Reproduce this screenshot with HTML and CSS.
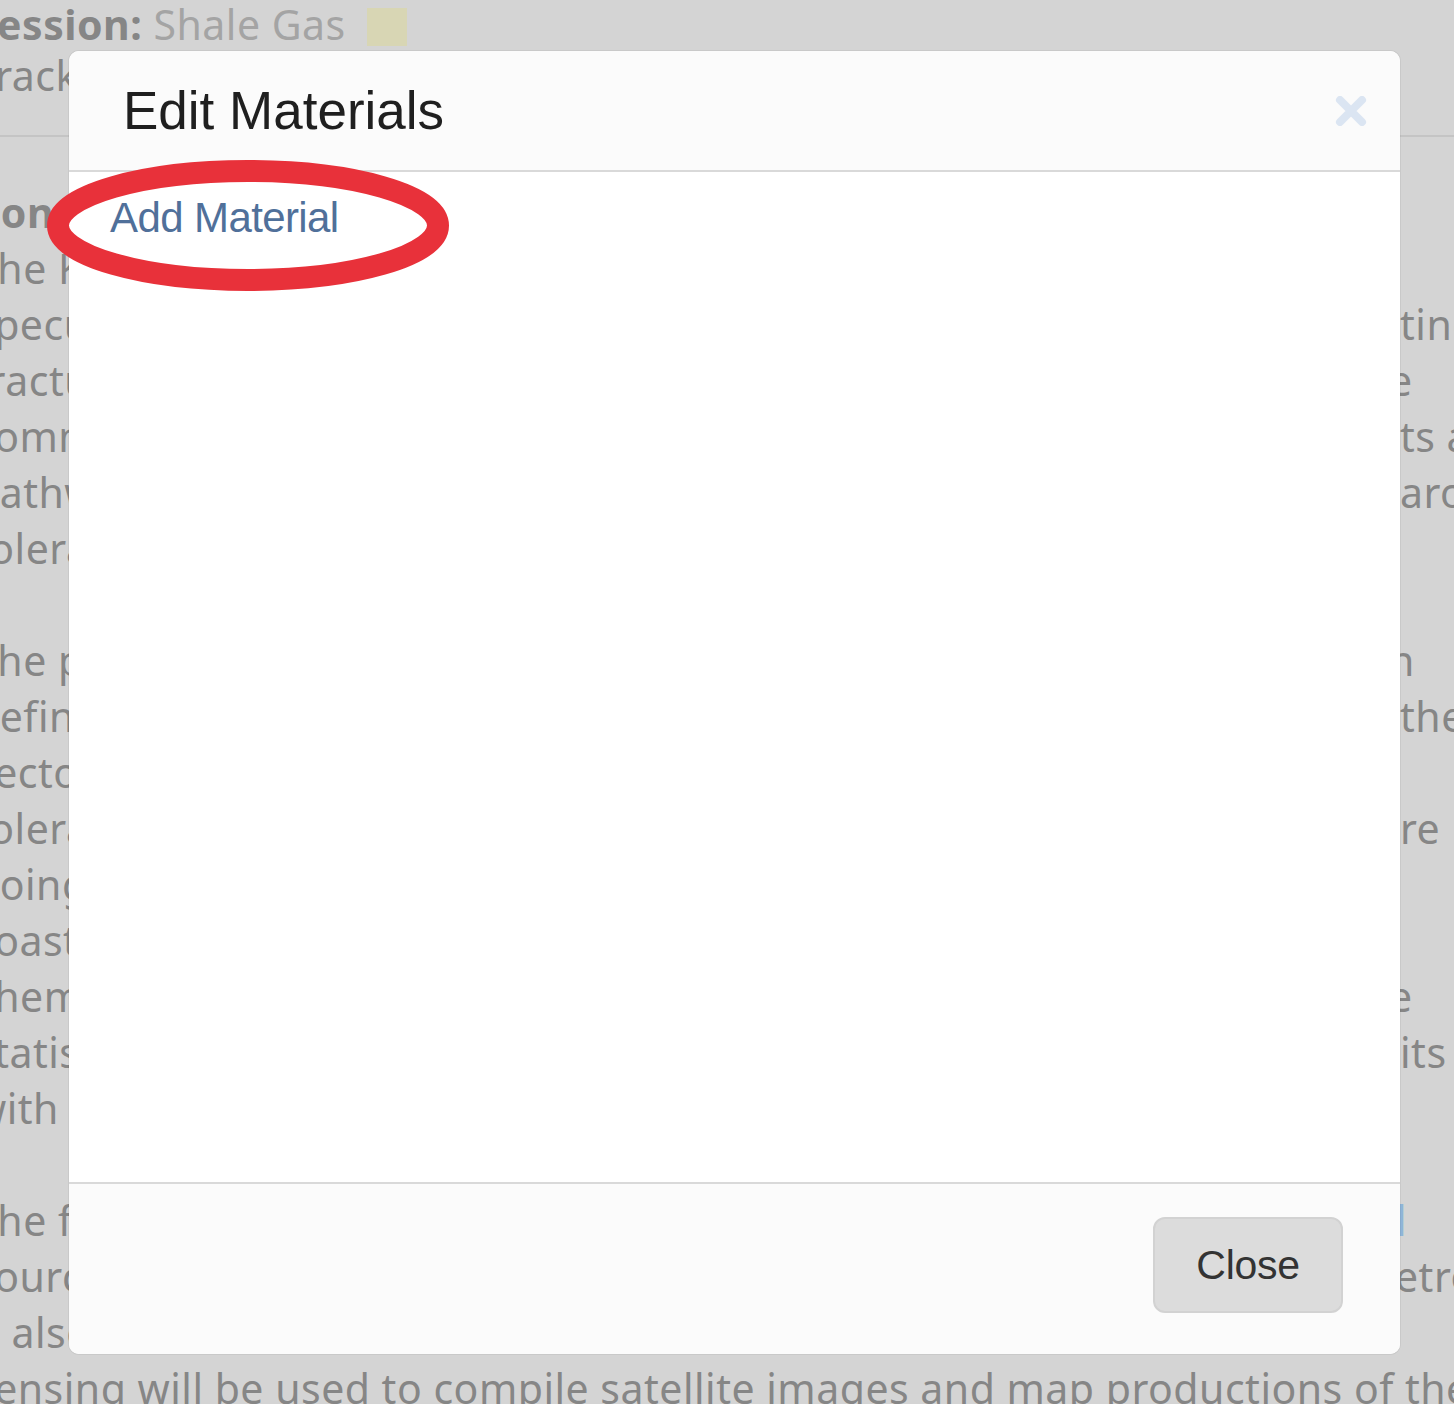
FILE: index.html
```html
<!DOCTYPE html>
<html lang="en">
<head>
<meta charset="utf-8">
<title>Edit Materials</title>
<link rel="stylesheet" href="styles.css">
</head>
<body>
<div class="page">
  <div class="session-line"><b>Session:</b> <span class="topic">Shale Gas</span><span class="swatch"></span></div>
  <div class="track-line">Tracking</div>
  <hr class="rule">
  <div class="para">
    <div class="ln"><b>Con</b></div>
    <div class="ln"><span>The Kern</span></div>
    <div class="ln"><span>speculative</span><span>ting</span></div>
    <div class="ln"><span>fracture</span><span class="r-cut">e</span></div>
    <div class="ln"><span>community</span><span>ts and</span></div>
    <div class="ln"><span>pathways</span><span>around</span></div>
    <div class="ln"><span>tolerance</span></div>
  </div>
  <div class="para">
    <div class="ln"><span>The pro</span><span class="r-cut">n</span></div>
    <div class="ln"><span>define</span><span>the</span></div>
    <div class="ln"><span>sectors</span></div>
    <div class="ln"><span>tolerance</span><span>re</span></div>
    <div class="ln"><span>going</span></div>
    <div class="ln"><span>coastal</span></div>
    <div class="ln"><span>chemical</span><span class="r-cut">e</span></div>
    <div class="ln"><span>statistics</span><span>its</span></div>
    <div class="ln"><span>with t</span></div>
  </div>
  <div class="para">
    <div class="ln"><span>The final</span><span class="link">l</span></div>
    <div class="ln"><span>sources</span><span class="r-nudge">etro</span></div>
    <div class="ln"><span>it also</span></div>
    <div class="ln full">sensing will be used to compile satellite images and map productions of the</div>
  </div>
</div>

<div class="modal">
  <div class="modal-header">
    <h2 class="modal-title">Edit Materials</h2>
    <button class="close-x" aria-label="Close">
      <svg width="32" height="30" viewBox="0 0 32 30"><path d="M5 4 L27 26 M27 4 L5 26" stroke="#dbe5f2" stroke-width="8" stroke-linecap="round"/></svg>
    </button>
  </div>
  <div class="modal-body">
    <a class="add-link" href="#">Add Material</a>
  </div>
  <div class="modal-footer">
    <button class="btn-close">Close</button>
  </div>
</div>

<svg class="highlight" width="402" height="131" viewBox="0 0 402 131"><ellipse cx="201" cy="65.5" rx="190" ry="54.5" fill="none" stroke="#e8313a" stroke-width="22"/></svg>
</body>
</html>
```

FILE: styles.css
```css
* { box-sizing: border-box; }
html, body { margin: 0; padding: 0; }
body {
  width: 1454px;
  height: 1404px;
  overflow: hidden;
  position: relative;
  background: #d4d4d4;
  color: #868686;
  font-family: "Noto Sans", "Open Sans", sans-serif;
}
.page {
  margin-left: -26px;
  font-size: 41px;
  letter-spacing: 0.5px;
  white-space: nowrap;
}
.session-line {
  margin-top: -1px;
  height: 51px;
  line-height: 51px;
}
.session-line b { font-weight: 700; }
.topic { color: #a4a4a4; }
.swatch {
  display: inline-block;
  vertical-align: top;
  width: 40px;
  height: 38px;
  margin-top: 9px;
  margin-left: 21px;
  background: #d8d6b4;
}
.track-line {
  height: 51px;
  line-height: 51px;
}
.rule {
  border: 0;
  border-top: 2px solid #c4c4c4;
  height: 0;
  margin: 34px 0 47px;
}
.para { margin-bottom: 56px; }
.ln {
  display: grid;
  grid-template-columns: 1426px auto;
  height: 56px;
  line-height: 56px;
}
.ln > span:first-child { overflow: hidden; }
.ln b { font-weight: 700; }
.ln.full { display: block; }
.r-cut { margin-left: -11px; }
.r-nudge { margin-left: -5px; }
.link { color: #8fb5d8; margin-left: -4px; }

.modal {
  position: absolute;
  left: 69px;
  top: 51px;
  width: 1331px;
  height: 1303px;
  background: #fff;
  border-radius: 10px;
  overflow: hidden;
  display: flex;
  flex-direction: column;
  box-shadow: 0 0 0 1px rgba(0, 0, 0, 0.05);
  font-family: "Liberation Sans", Arial, sans-serif;
}
.modal-header {
  display: flex;
  justify-content: space-between;
  align-items: center;
  background: #fbfbfb;
  padding: 30px 33px 29px 54px;
  border-bottom: 2px solid #d9d9d9;
}
.modal-title {
  margin: 0;
  font-size: 53px;
  line-height: 60px;
  font-weight: 400;
  color: #1f1f1f;
}
.close-x {
  border: 0;
  background: none;
  padding: 0;
  width: 32px;
  height: 30px;
  display: block;
}
.close-x svg { display: block; }
.modal-body {
  flex: 1;
  padding: 22px 41px;
}
.add-link {
  font-size: 42px;
  line-height: 48px;
  letter-spacing: -0.6px;
  color: #50709a;
  text-decoration: none;
}
.modal-footer {
  display: flex;
  justify-content: flex-end;
  background: #fbfbfb;
  border-top: 2px solid #d9d9d9;
  padding: 33px 57px 41px;
}
.btn-close {
  width: 190px;
  height: 96px;
  background: #dcdcdc;
  border: 2px solid #d2d2d2;
  border-radius: 12px;
  font-family: "Liberation Sans", Arial, sans-serif;
  font-size: 41px;
  letter-spacing: -0.3px;
  color: #333;
  padding: 0;
}
.highlight {
  position: absolute;
  left: 47px;
  top: 160px;
}
```
